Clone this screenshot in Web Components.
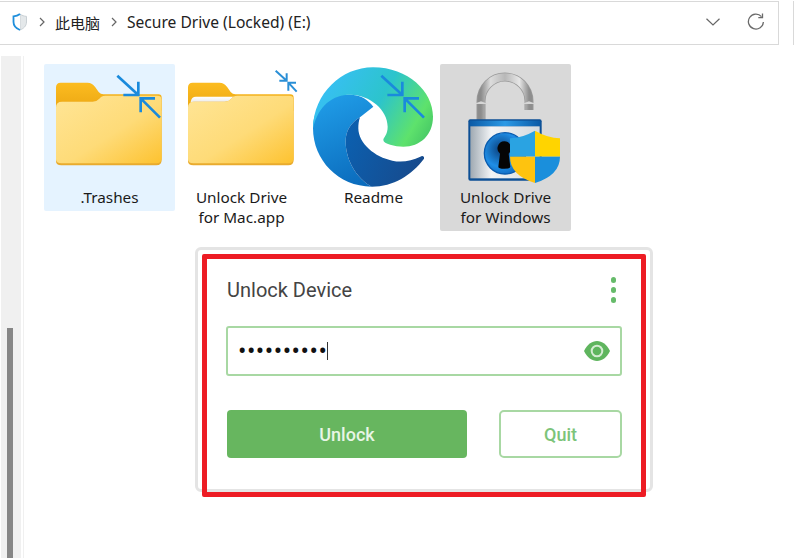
<!DOCTYPE html>
<html lang="zh">
<head>
<meta charset="utf-8">
<title>Secure Drive</title>
<style>
    html, body { margin: 0; height: 100%; background: #fff; overflow: hidden; }
</style>
</head>
<body>
<explorer-window>
    <address-bar slot="top">
        <span>此电脑</span>
        <span>Secure Drive (Locked) (E:)</span>
    </address-bar>
    <file-tile state="hover-blue" label=".Trashes"><folder-icon></folder-icon></file-tile>
    <file-tile label="Unlock Drive for Mac.app"><folder-icon paper small-arrows></folder-icon></file-tile>
    <file-tile label="Readme"><edge-icon></edge-icon></file-tile>
    <file-tile state="selected" label="Unlock Drive for Windows"><lock-icon></lock-icon></file-tile>
    <unlock-card slot="panel"></unlock-card>
</explorer-window>

<script>
const shortcutArrows = (small) => small
    ? `<g fill="none" stroke="#2a8fd6" stroke-width="6">
         <path d="M299 20L332 50M332 28V50H310"/><path d="M362 83L337 56M337 80V56H360"/>
       </g>`
    : `<g fill="none" stroke="#1a8adc" stroke-width="8">
         <path d="M220 35L283 93M283 53V93H238"/><path d="M348 161L290 103M290 145V103H333"/>
       </g>`;

class AddressBar extends HTMLElement {
    connectedCallback() {
        this.attachShadow({ mode: 'open' });
        const chevron = `<svg class="crumb" width="6" height="10" viewBox="0 0 6 10"><path d="M1 1l4 4-4 4" fill="none" stroke="#666" stroke-width="1.2"/></svg>`;
        const [computer, drive] = this.querySelectorAll('span');
        this.shadowRoot.innerHTML = `
            <style>
                :host {
                    display: flex;
                    gap: 14px;
                    margin-top: 1px;
                    font: 15.6px "Noto Sans", "Noto Sans CJK SC", sans-serif;
                    color: #222;
                }
                .box {
                    flex: 1;
                    height: 44px;
                    margin-left: -2px;
                    box-sizing: border-box;
                    border: 1px solid #d9d9d9;
                    display: flex;
                    align-items: center;
                    padding: 0 0 2px 13px;
                }
                .shield { margin-right: 11px; }
                .crumb { margin-right: 10px; }
                .name { margin-right: 11px; white-space: nowrap; }
                .name.cjk { font-size: 15px; }
                .spacer { flex: 1; }
                .down { margin-right: 27px; }
                .refresh { margin-right: 13px; }
                .next {
                    width: 1px;
                    height: 44px;
                    background: #d9d9d9;
                }
            </style>
            <div class="box">
                <svg class="shield" width="16" height="18" viewBox="0 0 16 18">
                    <path d="M8 1c2 1.500 4 2.200 6.500 2.400V9c0 4-3 6.600-6.500 8z" fill="#e4e8ea" stroke="#c9d0d4"/>
                    <path d="M8 1C6 2.500 4 3.200 1.500 3.400V9c0 4 3 6.600 6.500 8" fill="#fff" stroke="#1f8fdc" stroke-width="1.800"/>
                </svg>
                ${chevron}
                <span class="name cjk">${computer.textContent}</span>
                ${chevron}
                <span class="name">${drive.textContent}</span>
                <span class="spacer"></span>
                <svg class="down" width="14" height="8" viewBox="0 0 14 8"><path d="M.5 .8L7 7l6.500-6.200" fill="none" stroke="#666" stroke-width="1.200"/></svg>
                <svg class="refresh" width="18" height="18" viewBox="0 0 18 18">
                    <path d="M14.500 3.600A7.500 7.500 0 1 0 16.400 9" fill="none" stroke="#6a6a6a" stroke-width="1.300"/>
                    <path d="M15.500 .6v4h-4.200" fill="none" stroke="#6a6a6a" stroke-width="1.300"/>
                </svg>
            </div>
            <div class="next"></div>
        `;
    }
}

class ExplorerWindow extends HTMLElement {
    connectedCallback() {
        this.attachShadow({ mode: 'open' });
        this.shadowRoot.innerHTML = `
            <style>
                :host { display: flex; flex-direction: column; height: 558px; overflow: hidden; }
                .main { flex: 1; display: flex; margin-top: 11px; min-height: 0; }
                .rail {
                    width: 20px;
                    margin-left: 1px;
                    background: #f0f0f0;
                    display: flex;
                    flex-direction: column;
                    justify-content: flex-end;
                    align-items: center;
                }
                .thumb { width: 6px; height: 230px; background: #868686; margin-right: 2px; }
                .content {
                    flex: 1;
                    margin-left: 2px;
                    border-left: 1px solid #f0f0f0;
                    padding: 8px 0 0 20px;
                }
                .tiles { display: flex; align-items: flex-start; gap: 1px; height: 167px; }
                .panel { margin: 16px 0 0 151px; }
            </style>
            <slot name="top"></slot>
            <div class="main">
                <div class="rail"><div class="thumb"></div></div>
                <div class="content">
                    <div class="tiles"><slot></slot></div>
                    <div class="panel"><slot name="panel"></slot></div>
                </div>
            </div>
        `;
    }
}

class FileTile extends HTMLElement {
    connectedCallback() {
        this.attachShadow({ mode: 'open' });
        this.shadowRoot.innerHTML = `
            <style>
                :host {
                    display: block;
                    width: 131px;
                    border-radius: 2px;
                    text-align: center;
                    font: 15.3px/20px "Noto Sans", sans-serif;
                    color: #1a1a1a;
                    padding-bottom: 4px;
                }
                :host([state="hover-blue"]) { background: #e5f3ff; }
                :host([state="selected"]) { background: #d9d9d9; }
                .icon { height: 123px; }
                .label { padding: 0 16px; }
            </style>
            <div class="icon"><slot></slot></div>
            <div class="label">${this.getAttribute('label')}</div>
        `;
    }
}

class FolderIcon extends HTMLElement {
    connectedCallback() {
        this.attachShadow({ mode: 'open' });
        const paper = this.hasAttribute('paper')
            ? `<path d="M44 114Q46 98 60 98H176L166 112L60 130H44z" fill="url(#sheet)"/>` : '';
        this.shadowRoot.innerHTML = `
            <style>:host { display: block; } svg { display: block; overflow: visible; }</style>
            <svg width="131" height="125" viewBox="0 0 393 375">
                <defs>
                    <linearGradient id="front" x1="0" y1="0" x2="1" y2="1">
                        <stop offset="0" stop-color="#ffe596"/>
                        <stop offset=".55" stop-color="#fedb78"/>
                        <stop offset="1" stop-color="#fdc22f"/>
                    </linearGradient>
                    <linearGradient id="back" x1="0" y1="0" x2="0" y2="1">
                        <stop offset="0" stop-color="#fcbc20"/>
                        <stop offset="1" stop-color="#eba612"/>
                    </linearGradient>
                    <linearGradient id="sheet" x1="0" y1="0" x2="0" y2="1">
                        <stop offset="0" stop-color="#ffffff"/>
                        <stop offset="1" stop-color="#d8d8d8"/>
                    </linearGradient>
                </defs>
                <path d="M36 130V70Q36 56 50 56H130Q146 56 154 70L164 84Q170 91 178 91H343Q353 91 353 101V140H36z" fill="url(#back)"/>
                ${paper}
                <path d="M36 292V130Q36 113 54 113H146Q158 113 166 104Q172 95 184 95H340Q353 95 353 108V288Q353 304 337 304H52Q36 304 36 292z" fill="#e9ab2e"/>
                <path d="M36 286V130Q36 113 54 113H146Q158 113 166 104Q172 95 184 95H340Q353 95 353 108V282Q353 298 337 298H52Q36 298 36 286z" fill="url(#front)"/>
                ${shortcutArrows(this.hasAttribute('small-arrows'))}
            </svg>
        `;
    }
}

class EdgeIcon extends HTMLElement {
    connectedCallback() {
        this.attachShadow({ mode: 'open' });
        this.shadowRoot.innerHTML = `
            <style>:host { display: block; } svg { display: block; overflow: visible; }</style>
            <svg width="131" height="125" viewBox="0 0 393 375">
                <defs>
                    <linearGradient id="top" gradientUnits="userSpaceOnUse" x1="60" y1="50" x2="370" y2="230">
                        <stop offset="0" stop-color="#38bff6"/>
                        <stop offset=".5" stop-color="#2cc4cc"/>
                        <stop offset=".85" stop-color="#5ee26c"/>
                        <stop offset="1" stop-color="#48ca66"/>
                    </linearGradient>
                    <linearGradient id="left" gradientUnits="userSpaceOnUse" x1="60" y1="120" x2="170" y2="370">
                        <stop offset="0" stop-color="#1f9be6"/>
                        <stop offset="1" stop-color="#0b6cbd"/>
                    </linearGradient>
                    <linearGradient id="low" gradientUnits="userSpaceOnUse" x1="125" y1="240" x2="350" y2="330">
                        <stop offset="0" stop-color="#0c5fae"/>
                        <stop offset="1" stop-color="#174a8c"/>
                    </linearGradient>
                </defs>
                <g transform="translate(-9 -12)">
                    <path fill="url(#left)" d="M24 205C24 130 80 100 140 104C170 106 190 120 205 140L165 172C135 190 122 215 122 245C122 300 155 355 200 380C100 380 24 300 24 205z"/>
                    <path fill="url(#low)" d="M165 172C135 190 122 215 122 245C122 300 155 355 200 380C265 380 320 345 357 296C359 289 352 286 346 290C320 303 290 308 262 302C210 292 160 250 160 205C160 195 161 182 165 172z"/>
                    <path fill="url(#top)" d="M24 205C26 100 110 22 204 22C310 22 384 95 384 170C384 225 345 260 295 260C270 260 235 252 235 240C235 232 248 225 248 200C248 150 195 104 135 104C85 104 40 135 24 205z"/>
                </g>
                ${shortcutArrows(false)}
            </svg>
        `;
    }
}

class LockIcon extends HTMLElement {
    connectedCallback() {
        this.attachShadow({ mode: 'open' });
        this.shadowRoot.innerHTML = `
            <style>:host { display: block; } svg { display: block; overflow: visible; }</style>
            <svg width="131" height="125" viewBox="405 12 393 375">
                <defs>
                    <linearGradient id="steel" x1="0" y1="0" x2="1" y2="0">
                        <stop offset="0" stop-color="#8c8c8c"/>
                        <stop offset=".2" stop-color="#dcdcdc"/>
                        <stop offset=".5" stop-color="#b8b8b8"/>
                        <stop offset=".8" stop-color="#e6e6e6"/>
                        <stop offset="1" stop-color="#8e8e8e"/>
                    </linearGradient>
                    <linearGradient id="plate" x1="0" y1="0" x2="1" y2="0">
                        <stop offset="0" stop-color="#9fa9b2"/>
                        <stop offset=".3" stop-color="#f2f4f6"/>
                        <stop offset="1" stop-color="#d4dade"/>
                    </linearGradient>
                    <linearGradient id="band" x1="0" y1="0" x2="1" y2="0">
                        <stop offset="0" stop-color="#0b5aa6"/>
                        <stop offset=".5" stop-color="#2b9ae6"/>
                        <stop offset="1" stop-color="#0b5aa6"/>
                    </linearGradient>
                    <radialGradient id="well" cx=".4" cy=".4" r=".7">
                        <stop offset="0" stop-color="#0a3e7a"/>
                        <stop offset=".6" stop-color="#1f8ee6"/>
                        <stop offset="1" stop-color="#0d62b8"/>
                    </radialGradient>
                    <clipPath id="crest">
                        <path d="M690 212Q728 234 765 235V290Q765 345 690 369Q615 345 615 290V235Q652 234 690 212z"/>
                    </clipPath>
                </defs>
                <path d="M528 184V124A72 73 0 0 1 672 124V150" fill="none" stroke="#9a9a9a" stroke-width="27"/>
                <path d="M528 184V124A72 73 0 0 1 672 124V150" fill="none" stroke="url(#steel)" stroke-width="22"/>
                <path d="M650 132h44l-22 -8z" fill="#d6d6d6"/>
                <path d="M506 132h44l-22 -8z" fill="#d6d6d6"/>
                <rect x="490" y="178" width="220" height="184" rx="6" fill="#0c4f95"/>
                <rect x="494" y="182" width="212" height="17" fill="url(#band)"/>
                <rect x="496" y="199" width="208" height="156" fill="url(#plate)"/>
                <circle cx="600" cy="280" r="62" fill="url(#well)"/>
                <circle cx="600" cy="280" r="62" fill="none" stroke="#0a5cae" stroke-width="4"/>
                <path d="M598 244a21 21 0 0 1 13 37l5 39q0 6-18 6t-18-6l5-39a21 21 0 0 1 13-37z" fill="#050505"/>
                <g clip-path="url(#crest)">
                    <rect x="610" y="205" width="80" height="85" fill="#2aa3e2"/>
                    <rect x="690" y="205" width="80" height="85" fill="#ffd400"/>
                    <rect x="610" y="290" width="80" height="85" fill="#fec30f"/>
                    <rect x="690" y="290" width="80" height="85" fill="#1a8fdc"/>
                </g>
            </svg>
        `;
    }
}

class UnlockCard extends HTMLElement {
    connectedCallback() {
        this.attachShadow({ mode: 'open' });
        this.shadowRoot.innerHTML = `
            <style>
                :host {
                    display: block;
                    position: relative;
                    box-sizing: border-box;
                    width: 458px;
                    height: 245px;
                    padding: 27px 28px 0 28px;
                    border: 3px solid #e4e4e4;
                    border-radius: 6px;
                    font-family: Roboto, sans-serif;
                }
                .head {
                    display: flex;
                    justify-content: space-between;
                    align-items: center;
                    height: 26px;
                    margin-left: 1px;
                }
                h2 { margin: 0; font-size: 20px; font-weight: 400; color: #444; }
                .menu { display: flex; flex-direction: column; gap: 4.700px; margin-right: 6px; }
                .menu i { width: 5.300px; height: 5.300px; border-radius: 50%; background: #66bb6a; }
                .field {
                    height: 50px;
                    margin-top: 23px;
                    box-sizing: border-box;
                    border: 2px solid #a8d8a3;
                    border-radius: 3px;
                    display: flex;
                    align-items: center;
                    padding: 0 10px 0 10px;
                }
                .dots { font-size: 25px; letter-spacing: .5px; color: #111; line-height: 1; }
                .caret { width: 1px; height: 18px; background: #333; }
                .eye { margin-left: auto; }
                .actions { display: flex; justify-content: space-between; margin: 34px 0 0 1px; }
                .btn {
                    height: 48px;
                    box-sizing: border-box;
                    border-radius: 4px;
                    font-size: 18px;
                    font-weight: 500;
                    display: flex;
                    align-items: center;
                    justify-content: center;
                }
                .unlock { width: 240px; background: #67b65f; color: #e8f5e6; }
                .quit { width: 123px; border: 2px solid #a8d8a3; color: #7cc47a; background: #fff; border-radius: 5px; }
                .mark {
                    position: absolute;
                    left: 4px;
                    top: 4px;
                    width: 444px;
                    height: 243px;
                    box-sizing: border-box;
                    border: 5px solid #ed1c24;
                    border-radius: 2px;
                }
            </style>
            <div class="head">
                <h2>Unlock Device</h2>
                <div class="menu"><i></i><i></i><i></i></div>
            </div>
            <div class="field">
                <span class="dots">••••••••••</span><span class="caret"></span>
                <svg class="eye" width="26" height="20" viewBox="0 0 26 20">
                    <path d="M0 10C3 3.500 8 0 13 0s10 3.500 13 10c-3 6.500-8 10-13 10S3 16.500 0 10z" fill="#5fb55e"/>
                    <circle cx="13" cy="10" r="5.300" fill="none" stroke="#d5ecd3" stroke-width="2"/>
                </svg>
            </div>
            <div class="actions">
                <div class="btn unlock">Unlock</div>
                <div class="btn quit">Quit</div>
            </div>
            <div class="mark"></div>
        `;
    }
}

customElements.define('address-bar', AddressBar);
customElements.define('explorer-window', ExplorerWindow);
customElements.define('file-tile', FileTile);
customElements.define('folder-icon', FolderIcon);
customElements.define('edge-icon', EdgeIcon);
customElements.define('lock-icon', LockIcon);
customElements.define('unlock-card', UnlockCard);
</script>
</body>
</html>
